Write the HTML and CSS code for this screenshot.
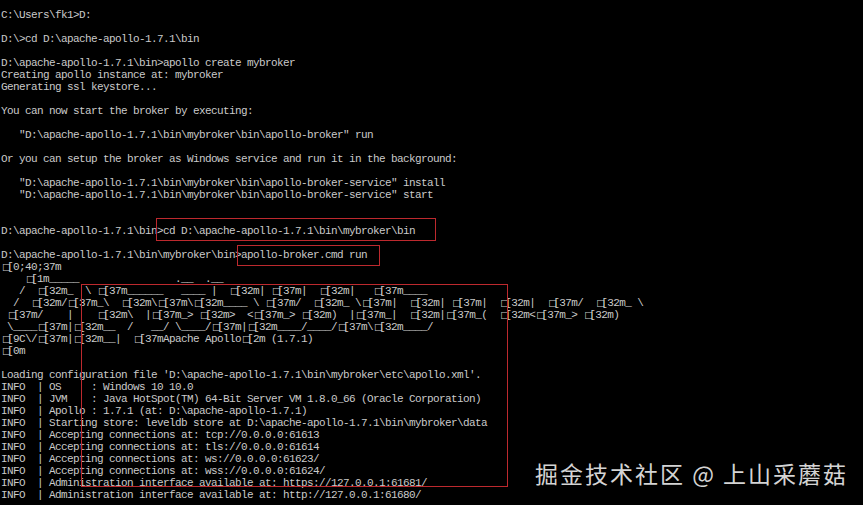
FILE: index.html
```html
<!DOCTYPE html>
<html lang="en">
<head>
<meta charset="utf-8">
<title>Command Prompt - apollo-broker</title>
<link rel="stylesheet" href="styles.css">
</head>
<body>
<div class="console">
<pre class="term">C:\Users\fk1&gt;D:

D:\&gt;cd D:\apache-apollo-1.7.1\bin

D:\apache-apollo-1.7.1\bin&gt;apollo create mybroker
Creating apollo instance at: mybroker
Generating ssl keystore...

You can now start the broker by executing:

   "D:\apache-apollo-1.7.1\bin\mybroker\bin\apollo-broker" run

Or you can setup the broker as Windows service and run it in the background:

   "D:\apache-apollo-1.7.1\bin\mybroker\bin\apollo-broker-service" install
   "D:\apache-apollo-1.7.1\bin\mybroker\bin\apollo-broker-service" start


D:\apache-apollo-1.7.1\bin&gt;cd D:\apache-apollo-1.7.1\bin\mybroker\bin

D:\apache-apollo-1.7.1\bin\mybroker\bin&gt;apollo-broker.cmd run
<span class="esc">□</span>[0;40;37m
    <span class="esc">□</span>[1m_____                .__  .__
   /  <span class="esc">□</span>[32m_  \ <span class="esc">□</span>[37m______   ____ |  <span class="esc">□</span>[32m| <span class="esc">□</span>[37m|  <span class="esc">□</span>[32m|   <span class="esc">□</span>[37m____
  /  <span class="esc">□</span>[32m/<span class="esc">□</span>[37m_\  <span class="esc">□</span>[32m\<span class="esc">□</span>[37m\<span class="esc">□</span>[32m____ \ <span class="esc">□</span>[37m/  <span class="esc">□</span>[32m_ \<span class="esc">□</span>[37m|  <span class="esc">□</span>[32m| <span class="esc">□</span>[37m|  <span class="esc">□</span>[32m|  <span class="esc">□</span>[37m/  <span class="esc">□</span>[32m_ \
 <span class="esc">□</span>[37m/    |    <span class="esc">□</span>[32m\  |<span class="esc">□</span>[37m_&gt; <span class="esc">□</span>[32m&gt;  &lt;<span class="esc">□</span>[37m_&gt; <span class="esc">□</span>[32m)  |<span class="esc">□</span>[37m_|  <span class="esc">□</span>[32m|<span class="esc">□</span>[37m_(  <span class="esc">□</span>[32m&lt;<span class="esc">□</span>[37m_&gt; <span class="esc">□</span>[32m)
 \____<span class="esc">□</span>[37m|<span class="esc">□</span>[32m__  /   __/ \____/<span class="esc">□</span>[37m|<span class="esc">□</span>[32m____/____/<span class="esc">□</span>[37m\<span class="esc">□</span>[32m____/
<span class="esc">□</span>[9C\/<span class="esc">□</span>[37m|<span class="esc">□</span>[32m__|  <span class="esc">□</span>[37mApache Apollo<span class="esc">□</span>[2m (1.7.1)
<span class="esc">□</span>[0m

Loading configuration file 'D:\apache-apollo-1.7.1\bin\mybroker\etc\apollo.xml'.
INFO  | OS     : Windows 10 10.0
INFO  | JVM    : Java HotSpot(TM) 64-Bit Server VM 1.8.0_66 (Oracle Corporation)
INFO  | Apollo : 1.7.1 (at: D:\apache-apollo-1.7.1)
INFO  | Starting store: leveldb store at D:\apache-apollo-1.7.1\bin\mybroker\data
INFO  | Accepting connections at: tcp://0.0.0.0:61613
INFO  | Accepting connections at: tls://0.0.0.0:61614
INFO  | Accepting connections at: ws://0.0.0.0:61623/
INFO  | Accepting connections at: wss://0.0.0.0:61624/
INFO  | Administration interface available at: https://127.0.0.1:61681/
INFO  | Administration interface available at: http://127.0.0.1:61680/</pre>
<div class="mark mark-cd"></div>
<div class="mark mark-run"></div>
<div class="mark mark-log"></div>
<div class="watermark">掘金技术社区 @ 上山采蘑菇</div>
</div>
</body>
</html>
```
FILE: styles.css
```css
html, body {
  margin: 0;
  padding: 0;
  background: #000;
}

.console {
  position: relative;
  width: 863px;
  height: 505px;
  overflow: hidden;
  background: #000;
}

.term {
  margin: 0;
  padding: 9px 0 0 1px;
  font-family: "Liberation Mono", "DejaVu Sans Mono", monospace;
  font-size: 11px;
  letter-spacing: -0.6px;
  line-height: 12px;
  color: #cacaca;
  white-space: pre;
}

.esc {
  display: inline-block;
  width: 6px;
  text-indent: 1px;
  font-family: "DejaVu Sans", sans-serif;
  font-size: 9.5px;
  letter-spacing: 0;
  line-height: 12px;
  overflow: visible;
}

.mark {
  position: absolute;
  box-sizing: border-box;
  border: 1px solid #bd292e;
}

.mark-cd {
  left: 156px;
  top: 218px;
  width: 280px;
  height: 23px;
}

.mark-run {
  left: 237px;
  top: 245px;
  width: 143px;
  height: 21px;
}

.mark-log {
  left: 81px;
  top: 284px;
  width: 427px;
  height: 203px;
}

.watermark {
  position: absolute;
  left: 535px;
  top: 459px;
  font-family: "Noto Sans CJK SC", sans-serif;
  font-size: 23px;
  line-height: 28px;
  letter-spacing: 2px;
  color: rgba(235, 235, 235, 0.92);
  white-space: nowrap;
}
```
